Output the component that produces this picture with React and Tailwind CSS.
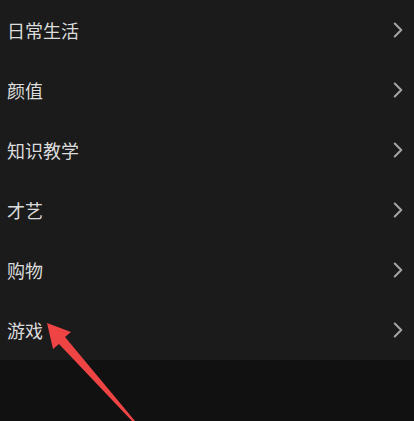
import { ChevronRight } from 'lucide-react';

const items = ['日常生活', '颜值', '知识教学', '才艺', '购物', '游戏'];

function Row({ label }) {
  return (
    <div className="flex h-[60px] items-center justify-between pl-[7px] pr-[3px]">
      <span className="text-[18px] leading-none text-[#dcdcdc]">{label}</span>
      <ChevronRight size={26} strokeWidth={1.9} className="text-[#a4a4a4]" />
    </div>
  );
}

export default function App() {
  return (
    <div
      className="relative h-[421px] w-[414px] overflow-hidden bg-[#111111]"
      style={{ fontFamily: '"Noto Sans CJK SC", "Noto Sans", sans-serif' }}
    >
      {/* category list */}
      <div className="flex flex-col bg-[#1b1b1b]">
        {items.map((label) => (
          <Row key={label} label={label} />
        ))}
      </div>

      {/* red annotation arrow */}
      <svg
        className="pointer-events-none absolute left-0 top-0"
        width="414"
        height="421"
        viewBox="0 0 414 421"
      >
        <polygon
          points="47,323 71,332 65,337 135,421 132,421 59,344 53,349"
          fill="#ef4444"
        />
      </svg>
    </div>
  );
}
